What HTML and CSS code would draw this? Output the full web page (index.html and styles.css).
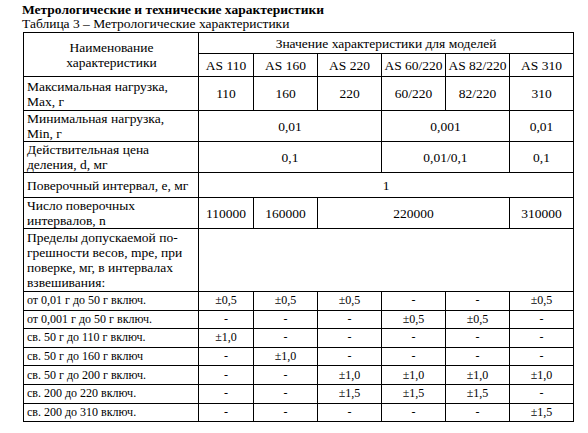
FILE: index.html
```html
<!DOCTYPE html>
<html lang="ru">
<head>
<meta charset="utf-8">
<link rel="stylesheet" href="styles.css">
</head>
<body>
<div class="page">
  <div class="title">Метрологические и технические характеристики</div>
  <div class="caption">Таблица 3 – Метрологические характеристики</div>
  <table class="spec">
    <colgroup>
      <col class="c-name">
      <col class="c-110">
      <col class="c-m">
      <col class="c-m">
      <col class="c-m">
      <col class="c-m">
      <col class="c-m">
    </colgroup>
    <tr class="h1">
      <td class="name center" rowspan="2">Наименование<br>характеристики</td>
      <td colspan="6">Значение характеристики для моделей</td>
    </tr>
    <tr class="h2">
      <td>AS 110</td><td>AS 160</td><td>AS 220</td><td>AS 60/220</td><td>AS 82/220</td><td>AS 310</td>
    </tr>
    <tr class="r35">
      <td class="name">Максимальная нагрузка,<br>Max, г</td>
      <td>110</td><td>160</td><td>220</td><td>60/220</td><td>82/220</td><td>310</td>
    </tr>
    <tr class="r31">
      <td class="name">Минимальная нагрузка,<br>Min, г</td>
      <td colspan="3">0,01</td><td colspan="2">0,001</td><td>0,01</td>
    </tr>
    <tr class="r31">
      <td class="name">Действительная цена<br>деления, d, мг</td>
      <td colspan="3">0,1</td><td colspan="2">0,01/0,1</td><td>0,1</td>
    </tr>
    <tr class="r25">
      <td class="name">Поверочный интервал, е, мг</td>
      <td colspan="6">1</td>
    </tr>
    <tr class="r31">
      <td class="name">Число поверочных<br>интервалов, n</td>
      <td>110000</td><td>160000</td><td colspan="3">220000</td><td>310000</td>
    </tr>
    <tr class="r63">
      <td class="name">Пределы допускаемой по-<br>грешности весов, mpe, при<br>поверке, мг, в интервалах<br>взвешивания:</td>
      <td colspan="6"></td>
    </tr>
    <tr class="sm">
      <td class="name">от 0,01 г до 50 г включ.</td>
      <td>±0,5</td><td>±0,5</td><td>±0,5</td><td>-</td><td>-</td><td>±0,5</td>
    </tr>
    <tr class="sm">
      <td class="name">от 0,001 г до 50 г включ.</td>
      <td>-</td><td>-</td><td>-</td><td>±0,5</td><td>±0,5</td><td>-</td>
    </tr>
    <tr class="sm">
      <td class="name">св. 50 г до 110 г включ.</td>
      <td>±1,0</td><td>-</td><td>-</td><td>-</td><td>-</td><td>-</td>
    </tr>
    <tr class="sm">
      <td class="name">св. 50 г до 160 г включ</td>
      <td>-</td><td>±1,0</td><td>-</td><td>-</td><td>-</td><td>-</td>
    </tr>
    <tr class="sm">
      <td class="name">св. 50 г до 200 г включ.</td>
      <td>-</td><td>-</td><td>±1,0</td><td>±1,0</td><td>±1,0</td><td>±1,0</td>
    </tr>
    <tr class="sm">
      <td class="name">св. 200 до 220 включ.</td>
      <td>-</td><td>-</td><td>±1,5</td><td>±1,5</td><td>±1,5</td><td>-</td>
    </tr>
    <tr class="sm">
      <td class="name">св. 200 до 310 включ.</td>
      <td>-</td><td>-</td><td>-</td><td>-</td><td>-</td><td>±1,5</td>
    </tr>
  </table>
</div>
</body>
</html>
```
FILE: styles.css
```css
html, body {
  margin: 0;
  padding: 0;
  background: #fff;
}
body {
  font-family: "Liberation Serif", "Times New Roman", Times, Tinos, "Noto Serif", "DejaVu Serif", serif;
  color: #000;
}
.page {
  padding: 3px 0 0 22px;
}
.title {
  font-weight: bold;
  font-size: 13.5px;
  line-height: 14px;
}
.caption {
  font-size: 13.5px;
  line-height: 13px;
  margin-bottom: 2px;
}
.spec {
  border-collapse: collapse;
  table-layout: fixed;
  width: 551px;
  margin-left: 1px;
  font-family: inherit;
  font-size: 13.5px;
}
.c-name { width: 175px; }
.c-110 { width: 55px; }
.c-m { width: 64px; }
.spec td {
  border: 1px solid #000;
  padding: 0 2px;
  text-align: center;
  vertical-align: middle;
  line-height: 15px;
  white-space: nowrap;
}
.spec td.name {
  text-align: left;
  padding-left: 3px;
}
.spec td.center {
  text-align: center;
}
.h1 { height: 21px; }
.h2 { height: 23px; }
.r35 { height: 34px; }
.r31 { height: 31px; }
.r25 { height: 25px; }
.r63 { height: 63px; }
.sm { height: 18.6px; }
.sm td {
  font-size: 12px;
  line-height: 13px;
}
```
